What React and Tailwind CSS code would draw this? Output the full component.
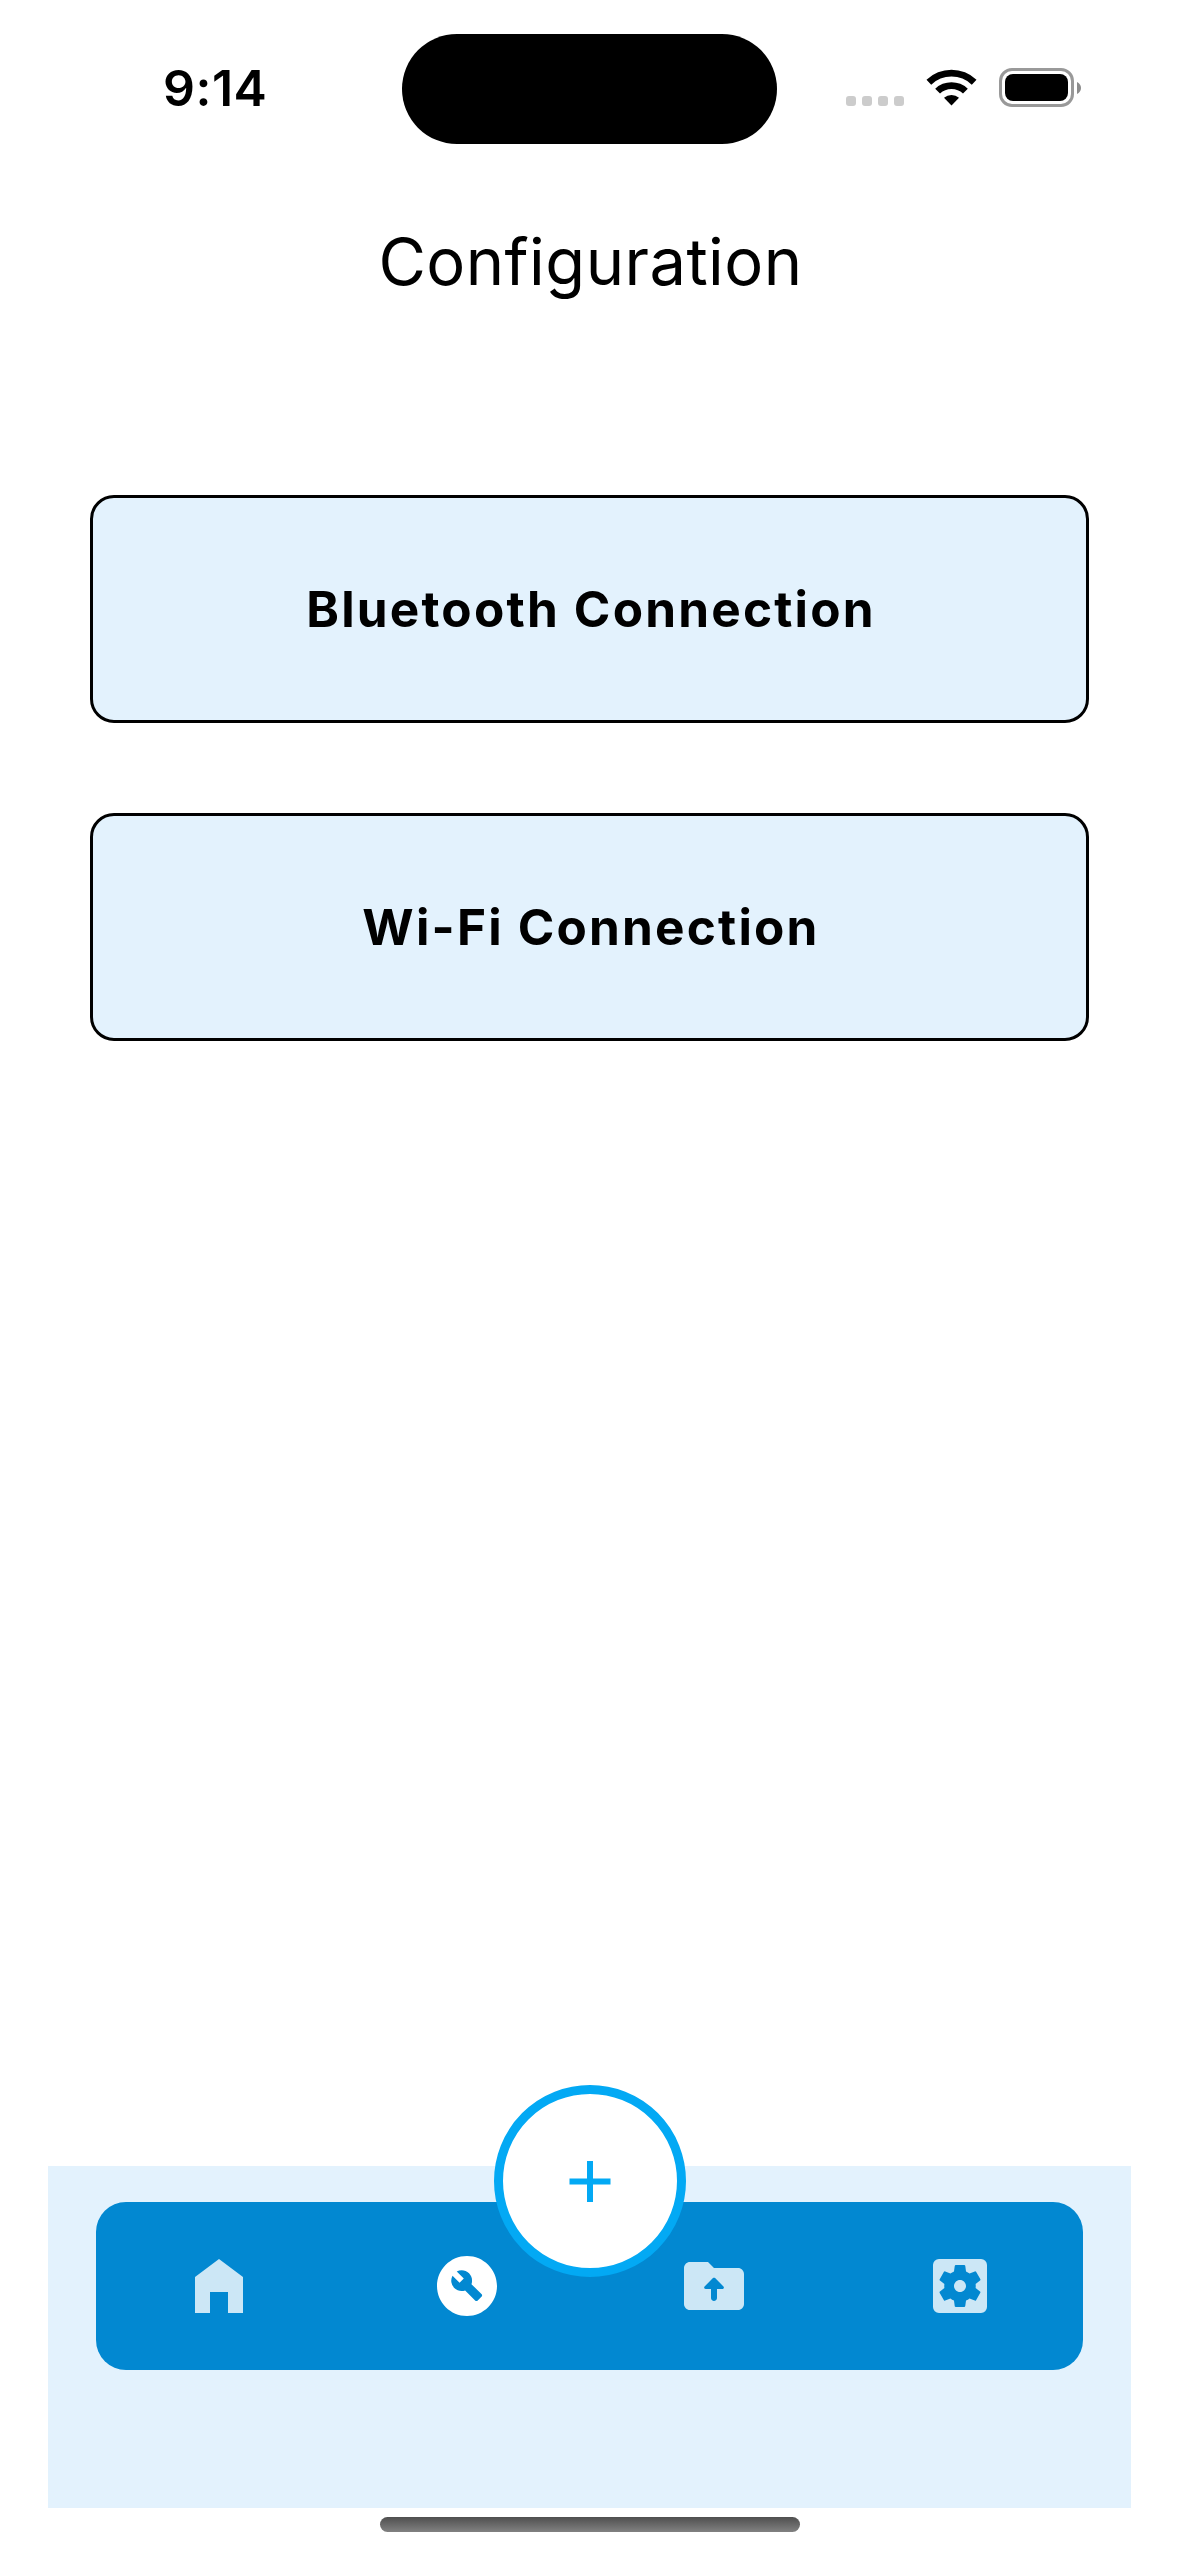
import { MdBuildCircle, MdSettingsApplications } from "react-icons/md";

function StatusBar() {
  return (
    <header className="flex h-[178px] items-start">
      <div className="flex w-[402px] pt-[58px] pl-[163px]">
        <span className="text-[50px] leading-[60px] font-semibold tracking-[0.5px]">9:14</span>
      </div>
      <div className="mt-[34px] h-[110px] w-[375px] rounded-full bg-black" />
      <div className="mt-[68px] ml-[69px] flex h-[39px] items-center">
        <div className="mt-[27px] flex gap-1.5">
          {[0, 1, 2, 3].map((i) => (
            <span key={i} className="size-2.5 rounded-[3px] bg-[#cccccc]" />
          ))}
        </div>
        <svg className="ml-[22px] h-[37px] w-[51px]" viewBox="0 0 51 37">
          <path d="M0.5 10.8 A36 36 0 0 1 50.5 10.8 L45.8 15.7 A29 29 0 0 0 5.2 15.7 Z" />
          <path d="M9.2 19.7 A23.5 23.5 0 0 1 41.8 19.7 L37 24.6 A16.6 16.6 0 0 0 14 24.6 Z" />
          <path d="M18 28.8 A11.2 11.2 0 0 1 33 28.8 L25.5 36.6 Z" />
        </svg>
        <div className="ml-[22px] flex h-[39px] w-[75px] rounded-[13px] border-[3px] border-[#999999] p-[3px]">
          <div className="flex-1 rounded-[8px] bg-black" />
        </div>
        <svg className="ml-[3px] h-3 w-1" viewBox="0 0 4 12">
          <path d="M0 0C2.4 1 4 3.400 4 6S2.400 11 0 12Z" fill="#8c8c8c" />
        </svg>
      </div>
    </header>
  );
}

function ConnectionButton({ label }) {
  return (
    <button className="flex h-[228px] w-full items-center justify-center rounded-[24px] border-[3px] border-black bg-[#e3f2fd] pb-px pl-[3px] text-[49.5px] leading-[60px] font-bold tracking-[2.2px]">
      {label}
    </button>
  );
}

function HomeIcon() {
  return (
    <svg className="size-[72px]" viewBox="0 0 24 24" fill="currentColor">
      <path d="M4 21V9l8-6 8 6v12h-5v-7H9v7z" />
    </svg>
  );
}

function FolderUploadIcon({ className }) {
  return (
    <svg className={className} viewBox="0 0 24 24" fill="currentColor">
      <path d="M20 6h-8l-2-2H4c-1.100 0-2 .9-2 2v12c0 1.100.9 2 2 2h16c1.100 0 2-.9 2-2V8c0-1.100-.9-2-2-2zm-7 7v3c0 .55-.45 1-1 1s-1-.45-1-1v-3H9.210c-.45 0-.67-.54-.35-.85l2.800-2.790c.2-.19.51-.19.71 0l2.790 2.790c.3.310.08.850-.37.850H13z" />
    </svg>
  );
}

function BottomNav() {
  return (
    <nav className="relative mx-12 h-[342px] bg-[#e3f2fd] px-12 pt-9">
      <div className="flex h-[168px] items-center rounded-[30px] bg-[#0288d1] pl-[87px] text-[#cce7f6]">
        <HomeIcon />
        <MdBuildCircle className="ml-44 size-[72px] text-white" />
        <FolderUploadIcon className="ml-[175px] size-[72px]" />
        <MdSettingsApplications className="ml-[174px] size-[72px]" />
      </div>
      <button className="absolute top-[-81px] left-[445.5px] flex size-48 items-center justify-center rounded-full border-[9px] border-[#03a9f4] bg-white">
        <svg className="size-[42px]" viewBox="0 0 42 42" fill="#03a9f4">
          <path d="M18 1h6v17.500h17.500v6h-17.500v17.500h-6v-17.500h-17.500v-6h17.500z" />
        </svg>
      </button>
    </nav>
  );
}

export default function App() {
  return (
    <div className="flex h-[2556px] w-[1179px] flex-col overflow-hidden bg-white font-['Inter',sans-serif] text-black">
      <StatusBar />
      <h1 className="mt-[44px] pl-0.5 text-center text-[65px] leading-[80px] font-normal tracking-[0.45px]">
        Configuration
      </h1>
      <main className="mt-[193px] flex flex-1 flex-col gap-[90px] px-[90px]">
        <ConnectionButton label="Bluetooth Connection" />
        <ConnectionButton label="Wi-Fi Connection" />
      </main>
      <BottomNav />
      <footer className="flex h-12 justify-center pt-[9px]">
        <div className="h-[15px] w-[420px] rounded-full bg-linear-to-b from-[#4f4f4f] to-[#828282]" />
      </footer>
    </div>
  );
}
